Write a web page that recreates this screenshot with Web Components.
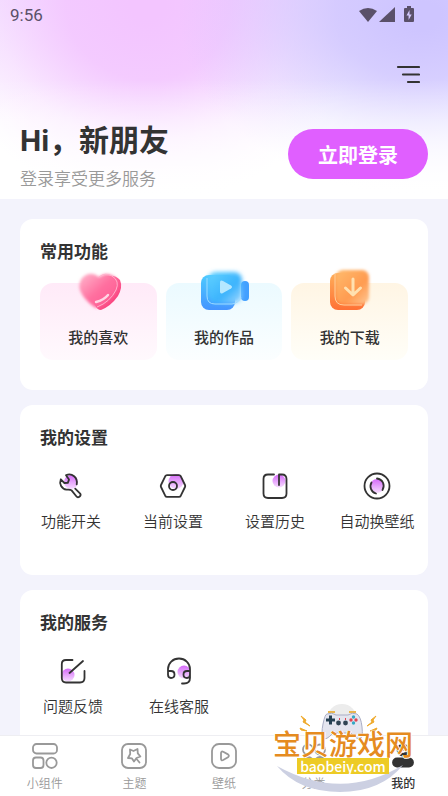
<!DOCTYPE html>
<html lang="zh-CN">
<head>
<meta charset="utf-8">
<meta name="viewport" content="width=device-width, initial-scale=1">
<title>我的</title>
<style>
    body {
        margin: 0;
        font-family: "Noto Sans CJK SC", sans-serif;
        color: #333;
    }
</style>
</head>
<body>

<profile-app></profile-app>

<script>

const ICONS = {
    wrench: `
        <circle cx="15" cy="10" r="7" fill="url(#g)"/>
        <path d="M10 3.2 13 7.6 11.8 10.9 8.4 11 4.8 7.3C2.9 12 5.6 17 10.5 17.6 12.9 17.8 14.6 17.6 15.6 18.4L20.3 24.3C22 26.6 25.7 24 24.2 21.6L19.2 16.6M10 3.2C16 .5 22 5.5 20.7 12.4"/>`,
    hexagon: `
        <circle cx="18" cy="9.5" r="7.5" fill="url(#g)"/>
        <path d="M9 3.2H21Q22.2 3.2 22.8 4.3L27 13Q27.5 14 27 15L22.8 23.7Q22.2 24.8 21 24.8H9Q7.8 24.8 7.2 23.7L3 15Q2.5 14 3 13L7.2 4.3Q7.8 3.2 9 3.2Z"/>
        <circle cx="15" cy="14" r="4"/>`,
    history: `
        <circle cx="19" cy="9" r="6.5" fill="url(#g)"/>
        <path d="M14 2.5H8Q3.5 2.5 3.5 7V21.5Q3.5 26 8 26H22Q26.5 26 26.5 21.5V7Q26.5 2.5 22 2.5H19V13"/>`,
    cycle: `
        <circle cx="15" cy="14" r="7" fill="url(#g)"/>
        <circle cx="15" cy="14" r="12.5"/>
        <path d="M9.5 10.5A7.5 7.5 0 0 0 14 21.5M15 6.5A7.5 7.5 0 0 1 20.5 18"/>`,
    edit: `
        <circle cx="10" cy="18" r="6.5" fill="url(#g)"/>
        <path d="M14.5 3H8Q3.8 3 3.8 7V21Q3.8 25.5 8 25.5H22Q26.5 25.5 26.5 21V14M11.5 16 25 4"/>`,
    headset: `
        <circle cx="20" cy="15" r="6.5" fill="url(#g)"/>
        <path d="M4 18V12A11 10.5 0 0 1 26 12V21Q26 26.5 20 26.5H18M4 14H7Q10.5 14 10.5 17.5T7 21Q4 21 4 17.5M26 14H23Q19.5 14 19.5 17.5T23 21Q26 21 26 17.5"/>`,
    widgets: `
        <rect x="3" y="3" width="24" height="9.5" rx="3.5"/>
        <rect x="3" y="16.5" width="10.5" height="10.5" rx="3"/>
        <circle cx="21.5" cy="21.8" r="5.2"/>`,
    theme: `
        <rect x="3" y="3" width="24" height="24" rx="6"/>
        <path d="M11 8.5 14.5 10 18.5 8 18.8 12.4 21.4 15.5 17.5 17 15 20.5 13 17.4 9 17 11.2 13Z M18 18.5 20.5 21.5"/>`,
    wallpaper: `
        <rect x="3" y="3" width="24" height="24" rx="7"/>
        <path d="M12 12.2Q12 9.8 14.2 10.8L19 13.4Q20.8 14.8 19 16.2L14.2 19Q12 20 12 17.6Z"/>`,
    category: `
        <circle cx="9" cy="8.5" r="5"/><circle cx="21" cy="8.5" r="5"/>
        <circle cx="9" cy="21" r="5"/><circle cx="21" cy="21" r="5"/>`,
    mine: `
        <circle cx="15" cy="9" r="5.5" fill="#333"/>
        <path d="M12 9Q15 13 18 9" stroke="#fff"/>
        <rect x="5" y="17.5" width="20" height="8" rx="4" fill="#333"/>`,
    heart: `
        <defs>
            <linearGradient id="a" x1="0" y1="0" x2="1" y2="1"><stop stop-color="#ff93b8"/><stop offset="1" stop-color="#f92e70"/></linearGradient>
            <linearGradient id="b" x1="0" y1="0" x2="1" y2="1"><stop stop-color="#ffb8ce"/><stop offset=".5" stop-color="#ff6f9f"/><stop offset="1" stop-color="#fc5690"/></linearGradient>
            <linearGradient id="f"><stop stop-color="#fff" stop-opacity="0"/><stop offset=".3" stop-color="#fff"/></linearGradient>
            <mask id="m"><rect width="60" height="50" fill="url(#f)"/></mask>
            <filter id="s" x="-.2" y="-.2" width="1.4" height="1.4"><feGaussianBlur stdDeviation="1.8"/></filter>
        </defs>
        <g transform="translate(1 0)">
            <path d="M33 12C38 7 47 8 51 13Q54 20 49 29Q42 39 32 43Q28 43 26 38L19 26Q20 12 33 12Z" fill="url(#a)"/>
            <path d="M30 10Q21 3 13 11Q7 19 14 29Q19 36 27 41Q43 34 48 22Q51 11 42 8Q36 5 30 10Z" fill="url(#b)" filter="url(#s)"/>
            <path d="M30 10Q36 5 43 9Q51 14 47 23Q41 35 28 40" fill="none" stroke="#ffb0cb" mask="url(#m)"/>
            <path d="M27 35Q35 33 39 28" fill="none" stroke="#ffd6e5" stroke-width="2.4" stroke-linecap="round"/>
        </g>`,
    camera: `
        <defs>
            <linearGradient id="a" x1="0" y1="0" x2="0" y2="1"><stop stop-color="#4dcaff"/><stop offset="1" stop-color="#4594ff"/></linearGradient>
            <linearGradient id="b" x1="0" y1="0" x2="1" y2="1"><stop stop-color="#63d3ff"/><stop offset=".6" stop-color="#3bb3fd"/><stop offset="1" stop-color="#a3d9ff"/></linearGradient>
            <filter id="s" x="-.2" y="-.2" width="1.4" height="1.4"><feGaussianBlur stdDeviation="2.2"/></filter>
        </defs>
        <rect x="7" y="8" width="34" height="35" rx="8" fill="url(#a)"/>
        <rect x="47" y="14" width="8" height="20" rx="4" fill="#429fff"/>
        <rect x="14" y="5" width="34" height="31" rx="8" fill="url(#b)" filter="url(#s)"/>
        <path d="M13 11V29Q13 37 21 37H38Q45 36 47 30" fill="none" stroke="#9edcff"/>
        <path d="M26 15.5Q26 12.5 29 14L37 18.5Q39 20 37 21.5L29 26Q26 27.5 26 24.5Z" fill="#b5e8ff"/>`,
    download: `
        <defs>
            <linearGradient id="a" x1="0" y1="0" x2="0" y2="1"><stop stop-color="#ffae5a"/><stop offset="1" stop-color="#ff7135"/></linearGradient>
            <linearGradient id="b" x1="0" y1="0" x2="1" y2="1"><stop stop-color="#ffbb6d"/><stop offset=".6" stop-color="#ff9b50"/><stop offset="1" stop-color="#ffc895"/></linearGradient>
            <filter id="s" x="-.2" y="-.2" width="1.4" height="1.4"><feGaussianBlur stdDeviation="1.8"/></filter>
        </defs>
        <rect x="10" y="6" width="35" height="37" rx="8" fill="url(#a)"/>
        <rect x="16" y="3" width="33" height="34" rx="7" fill="url(#b)" filter="url(#s)"/>
        <path d="M15 7V29Q15 38 24 38H42" fill="none" stroke="#ffce9b"/>
        <path d="M33 12V27M25.5 21 33 28 40.5 21" fill="none" stroke="#ffe0b0" stroke-width="3" stroke-linecap="round" stroke-linejoin="round"/>`
};


customElements.define("line-icon",

    class extends HTMLElement {

    connectedCallback() {
        this.attachShadow({ mode: "open" }).innerHTML = `
            <style>
                :host { display: block; width: 30px; height: 30px; }
                svg { display: block; }
                circle[fill^=url] { stroke: none; }
            </style>
            <svg width="30" height="30" viewBox="0 0 30 30" aria-hidden="true" fill="none"
                 stroke="currentColor" stroke-width="1.8" stroke-linecap="round" stroke-linejoin="round">
                <linearGradient id="g" x1="0" y1="0" x2="0" y2="1">
                    <stop stop-color="#d56af8"/><stop offset="1" stop-color="#f6dcff"/>
                </linearGradient>
                ${ICONS[this.getAttribute("name")]}
            </svg>`;
    }
});


customElements.define("status-bar",

    class extends HTMLElement {

    connectedCallback() {
        this.attachShadow({ mode: "open" }).innerHTML = `
            <style>
                :host {
                    display: flex;
                    justify-content: space-between;
                    align-items: center;
                    height: 30px;
                    padding: 0 32px 0 10px;
                    font: 400 17px/30px Roboto, sans-serif;
                    color: #5a5069;
                }
                svg { display: block; }
            </style>
            <span>9:56</span>
            <svg width="58" height="18" viewBox="0 0 58 18" fill="currentColor" aria-hidden="true">
                <path d="M1 5Q10-1 19 5L10 16Z"/>
                <path d="M37 1V16H21Z"/>
                <path d="M49 0h4v2h2q1 0 1 1V15q0 1-1 1h-8q-1 0-1-1V3q0-1 1-1h2Z"/>
                <path d="M51.5 4 48.5 9.5H50.6V14L53.7 8.5H51.5Z" fill="#d4caff"/>
            </svg>`;
    }
});


customElements.define("profile-header",

    class extends HTMLElement {

    connectedCallback() {
        this.attachShadow({ mode: "open" }).innerHTML = `
            <style>
                :host {
                    display: block;
                    background:
                        linear-gradient(180deg, #fff0 40%, #fff 98%),
                        radial-gradient(ellipse 54% 90% at 94% 8%, #cec5ff 8%, #cec5ffd0 35%, #cec5ff50 70%, #cec5ff00 100%),
                        radial-gradient(ellipse 48% 100% at 33% 2%, #f3c5ff 8%, #f3c5ffe0 38%, #f3c5ff50 70%, #f3c5ff00 100%),
                        linear-gradient(#f4e6ff, #fff 60%);
                }
                .menu { display: flex; justify-content: flex-end; padding: 30px 24px 0; }
                .menu button { padding: 4px; border: 0; background: none; color: #333; }
                svg { display: block; }
                .user {
                    display: flex;
                    justify-content: space-between;
                    align-items: center;
                    padding: 28px 20px 7px;
                }
                h1 { margin: 0; font-size: 30px; line-height: 44px; }
                .hi { font-family: Roboto, sans-serif; }
                p { margin: 0; font-size: 17px; line-height: 29px; font-weight: 350; color: #999; }
                .login {
                    height: 50px;
                    padding: 0 30px;
                    border: 0;
                    border-radius: 25px;
                    background: #e05fff;
                    color: #fff;
                    font: bold 20px "Noto Sans CJK SC", sans-serif;
                }
            </style>
            <status-bar></status-bar>
            <div class="menu">
                <button aria-label="菜单">
                    <svg width="24" height="20" viewBox="0 0 24 20" fill="none" stroke="currentColor" stroke-width="2.2" stroke-linecap="round">
                        <path d="M2 3H23M7 10.5H23M12 18H23"/>
                    </svg>
                </button>
            </div>
            <div class="user">
                <div>
                    <h1><span class="hi">Hi</span>，新朋友</h1>
                    <p>登录享受更多服务</p>
                </div>
                <button class="login">立即登录</button>
            </div>`;
    }
});


customElements.define("panel-section",

    class extends HTMLElement {

    connectedCallback() {
        this.attachShadow({ mode: "open" }).innerHTML = `
            <style>
                :host {
                    display: block;
                    flex-shrink: 0;
                    padding: 20px 0 30px;
                    border-radius: 13px;
                    background: #fff;
                }
                h2 { margin: 0; padding: 0 20px; font-size: 17px; line-height: 24px; font-weight: 700; }
                .items { display: grid; grid-template-columns: repeat(4, 1fr); padding: 19px 0 13px; }
                :host([layout="cards"]) .items {
                    grid-template-columns: repeat(3, 1fr);
                    gap: 9px;
                    padding: 20px 20px 0;
                }
                :host([layout="wide"]) .items { grid-template-columns: repeat(auto-fill, 106px); }
            </style>
            <h2>${this.getAttribute("heading")}</h2>
            <div class="items"><slot></slot></div>`;
    }
});


customElements.define("feature-card",

    class extends HTMLElement {

    connectedCallback() {
        this.attachShadow({ mode: "open" }).innerHTML = `
            <style>
                :host { display: block; --tint: #ffeaf8; --fade: #fff9fd; }
                :host([icon="camera"]) { --tint: #ebfaff; --fade: #fbfeff; }
                :host([icon="download"]) { --tint: #fff5e4; --fade: #fffef8; }
                button {
                    position: relative;
                    display: block;
                    width: 100%;
                    padding: 43px 0 12px;
                    border: 0;
                    border-radius: 13px;
                    background: linear-gradient(var(--tint), var(--fade));
                    color: inherit;
                    font: 500 15px/22px "Noto Sans CJK SC", sans-serif;
                }
                /* the picture sticks out over the top edge of the card */
                svg { position: absolute; top: -16px; left: 50%; margin-left: -30px; }
            </style>
            <button>
                <svg width="60" height="50" viewBox="0 0 60 50" aria-hidden="true">${ICONS[this.getAttribute("icon")]}</svg>
                <slot></slot>
            </button>`;
    }
});


customElements.define("menu-item",

    class extends HTMLElement {

    connectedCallback() {
        this.attachShadow({ mode: "open" }).innerHTML = `
            <style>
                :host { display: block; }
                button {
                    display: flex;
                    flex-direction: column;
                    align-items: center;
                    gap: 8px;
                    width: 100%;
                    padding: 4px 0 0;
                    border: 0;
                    background: none;
                    color: inherit;
                    font: 350 15px/22px "Noto Sans CJK SC", sans-serif;
                    white-space: nowrap;
                }
            </style>
            <button>
                <line-icon name="${this.getAttribute("icon")}"></line-icon>
                <slot></slot>
            </button>`;
    }
});


customElements.define("tab-item",

    class extends HTMLElement {

    connectedCallback() {
        this.attachShadow({ mode: "open" }).innerHTML = `
            <style>
                :host { display: block; flex: 1; }
                a {
                    display: flex;
                    flex-direction: column;
                    align-items: center;
                    gap: 3px;
                    padding: 5px 0 4px;
                    color: #999;
                    font-size: 12px;
                    line-height: 18px;
                    font-weight: 350;
                    text-decoration: none;
                }
                :host([active]) a { color: #333; font-weight: 500; }
            </style>
            <a href="#"><line-icon name="${this.getAttribute("icon")}"></line-icon><slot></slot></a>`;
    }
});


customElements.define("site-mark",

    class extends HTMLElement {

    connectedCallback() {
        this.attachShadow({ mode: "open" }).innerHTML = `
            <style>
                :host {
                    position: absolute;
                    right: 34px;
                    bottom: 4px;
                    display: block;
                    width: 142px;
                    pointer-events: none;
                }
                svg { position: absolute; left: 0; bottom: 0; }
                .text { position: relative; display: flex; flex-direction: column; align-items: center; padding-bottom: 18px; }
                .name {
                    font-size: 28px;
                    line-height: 30px;
                    font-weight: 500;
                    color: #e58b20;
                    white-space: nowrap;
                    text-shadow: 1px 0 #fff, -1px 0 #fff, 0 1px #fff;
                }
                .url {
                    padding: 0 3px;
                    background: #edcb25;
                    color: #fff;
                    font: 500 14px/16px "Noto Sans CJK SC", sans-serif;
                }
            </style>
            <svg width="142" height="92" viewBox="0 0 142 92" aria-hidden="true">
                <circle cx="70" cy="19" r="15" fill="#ececec"/>
                <path d="M56 12h7M77 12h7" stroke="#e9b64d" stroke-width="2"/>
                <path d="M55 14Q60 12 64 15H76Q80 12 85 14Q89 17 90 27T89 38Q86 41 79 33H61Q54 41 51 38Q49 34 51 24T55 14Z" fill="#e4e5ef" stroke="#aaaec6"/>
                <path d="M54 20h9M58.5 15.5v9" stroke="#254052" stroke-width="3"/>
                <g fill="#df4452"><circle cx="79" cy="20" r="1.7"/><circle cx="84" cy="20" r="1.7"/></g>
                <g fill="#35a8c4"><circle cx="81.5" cy="17" r="1.7"/><circle cx="81.5" cy="23" r="1.7"/></g>
                <circle cx="66.500" cy="23" r="2.400" fill="#304454"/><circle cx="73.500" cy="23" r="2.400" fill="#304454"/>
                <path d="M67 19h1M73 19h1" stroke="#df4452" stroke-width="2"/>
                <path d="M29 16 34 20 33 22 38 26 31 22 32 20ZM104 16 99 20 100 22 95 26 102 22 101 20ZM28 28 35 31 29 30ZM105 28 98 31 104 30Z" fill="#efaa2c" stroke="#efaa2c"/>
                <path d="M5 66Q70 102 131 65Q109 92 68 92Q27 92 5 66Z" fill="#ccd0e2"/>
            </svg>
            <div class="text">
                <span class="name">宝贝游戏网</span>
                <span class="url">baobeiy.com</span>
            </div>`;
    }
});


customElements.define("profile-app",

    class extends HTMLElement {

    connectedCallback() {
        this.attachShadow({ mode: "open" }).innerHTML = `
            <style>
                :host {
                    position: relative;
                    display: flex;
                    flex-direction: column;
                    height: 100vh;
                    overflow: hidden;
                    background: #f3f3fc;
                }
                main {
                    display: flex;
                    flex: 1;
                    flex-direction: column;
                    gap: 15px;
                    min-height: 0;
                    padding: 20px 20px 0;
                    overflow: hidden;
                }
                nav { display: flex; border-top: 1px solid #eeeef2; background: #fff; }
            </style>
            <profile-header></profile-header>
            <main>
                <panel-section heading="常用功能" layout="cards">
                    <feature-card icon="heart">我的喜欢</feature-card>
                    <feature-card icon="camera">我的作品</feature-card>
                    <feature-card icon="download">我的下载</feature-card>
                </panel-section>
                <panel-section heading="我的设置">
                    <menu-item icon="wrench">功能开关</menu-item>
                    <menu-item icon="hexagon">当前设置</menu-item>
                    <menu-item icon="history">设置历史</menu-item>
                    <menu-item icon="cycle">自动换壁纸</menu-item>
                </panel-section>
                <panel-section heading="我的服务" layout="wide">
                    <menu-item icon="edit">问题反馈</menu-item>
                    <menu-item icon="headset">在线客服</menu-item>
                </panel-section>
            </main>
            <nav>
                <tab-item icon="widgets">小组件</tab-item>
                <tab-item icon="theme">主题</tab-item>
                <tab-item icon="wallpaper">壁纸</tab-item>
                <tab-item icon="category">分类</tab-item>
                <tab-item icon="mine" active>我的</tab-item>
            </nav>
            <site-mark></site-mark>`;
    }
});

</script>
</body>
</html>
